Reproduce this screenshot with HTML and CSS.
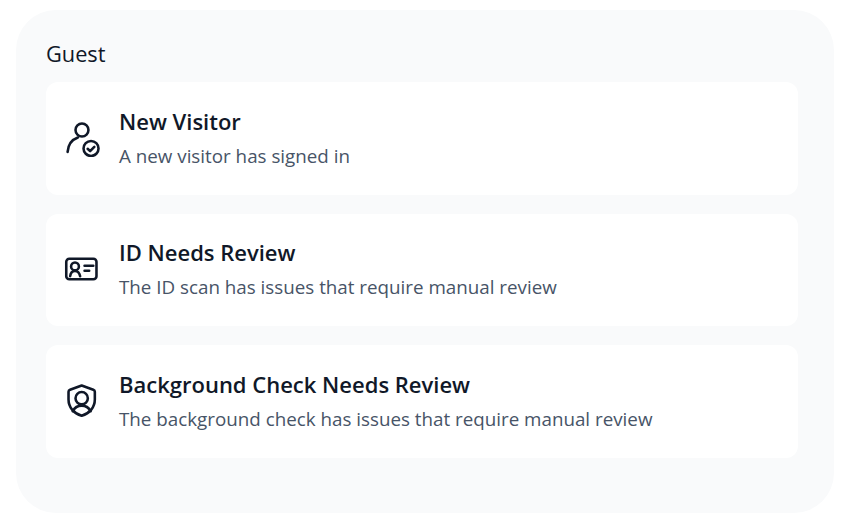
FILE: index.html
```html
<!DOCTYPE html>
<html lang="en">
<head>
  <meta charset="UTF-8">
  <meta name="viewport" content="width=device-width, initial-scale=1.0">
  <title>Guest Notifications</title>
  <link rel="stylesheet" href="styles.css">
</head>
<body>
  <div class="panel">
    <h2>Guest</h2>
    <div class="list">
      <div class="item">
        <svg class="icon" viewBox="0 0 36 36" fill="none" stroke="#101828" stroke-width="2.500" stroke-linecap="round" stroke-linejoin="round">
          <circle cx="17.500" cy="9.700" r="6.300"/>
          <path d="M3.500 31c.5-7 4.500-12 10-14"/>
          <circle cx="26.300" cy="27.700" r="7.300"/>
          <path d="M23 28l2.400 2.300 4.100-4.200"/>
        </svg>
        <div class="text">
          <h4>New Visitor</h4>
          <p>A new visitor has signed in</p>
        </div>
      </div>
      <div class="item">
        <svg class="icon" viewBox="0 0 36 36" fill="none" stroke="#101828" stroke-width="2.500" stroke-linecap="round" stroke-linejoin="round">
          <rect x="2.200" y="7.500" width="29.400" height="20" rx="3"/>
          <circle cx="10.700" cy="15" r="3.800"/>
          <path d="M6 24.500c.4-3 2.200-5 4.700-5s4.300 2 5 5"/>
          <path d="M20 14.400h8.500M20 19.200h4.500"/>
        </svg>
        <div class="text">
          <h4>ID Needs Review</h4>
          <p>The ID scan has issues that require manual review</p>
        </div>
      </div>
      <div class="item">
        <svg class="icon" viewBox="0 0 36 36" fill="none" stroke="#101828" stroke-width="2.500" stroke-linecap="round" stroke-linejoin="round">
          <path d="M17.200 2.400l11.300 4.200c1 .4 1.500 1 1.500 2V16c0 7.500-5 13.500-12.800 15.800C9.400 29.500 4.400 23.500 4.400 16V8.600c0-1 .5-1.600 1.500-2z"/>
          <circle cx="17.200" cy="14.800" r="6"/>
          <path d="M8.500 27.500c1.800-3.500 5-5.500 8.700-5.500s6.900 2 8.700 5.500"/>
        </svg>
        <div class="text">
          <h4>Background Check Needs Review</h4>
          <p>The background check has issues that require manual review</p>
        </div>
      </div>
    </div>
  </div>
</body>
</html>
```

FILE: styles.css
```css
body {
  font-family: "Open Sans", sans-serif;
  margin: 0;
  padding: 10px 20px 19px 16px;
  background: #fff;
}
.panel {
  height: 503px;
  box-sizing: border-box;
  padding: 29px 36px 0 30px;
  background: #f9fafb;
  border-radius: 40px;
}
h2 {
  margin: 0 0 13px;
  font-size: 21.75px;
  line-height: 30px;
  font-weight: 400;
  color: #101828;
}
.list {
  display: flex;
  flex-direction: column;
  gap: 19px;
}
.item {
  display: flex;
  align-items: center;
  gap: 18px;
  height: 112.5px;
  padding-left: 18px;
  background: #fff;
  border-radius: 12px;
}
.icon {
  width: 37px;
  height: 37px;
  flex-shrink: 0;
}
.text {
  margin-bottom: 1px;
}
.text h4 {
  margin: 0 0 7px;
  font-size: 22px;
  line-height: 30px;
  font-weight: 600;
  color: #101828;
}
.text p {
  margin: 0;
  font-size: 18.8px;
  line-height: 27px;
  color: #475467;
}
```
